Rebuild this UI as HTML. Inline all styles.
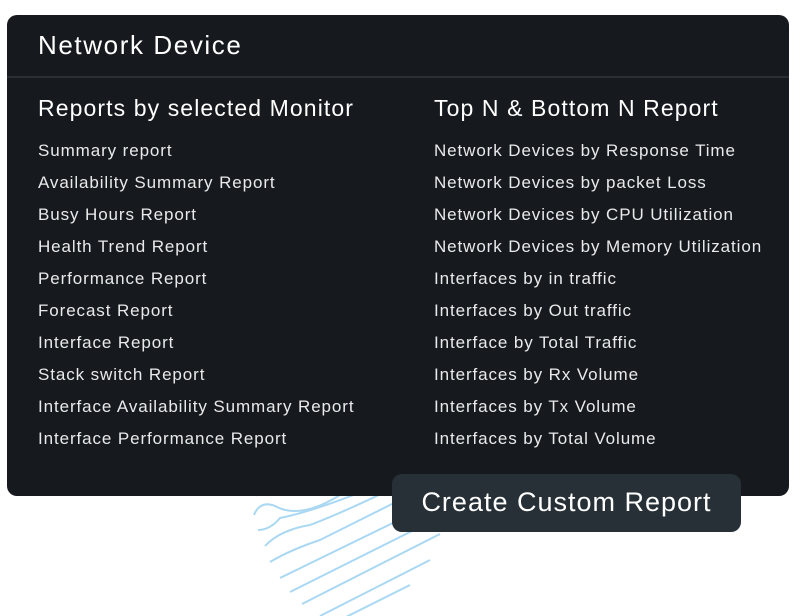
<!DOCTYPE html>
<html><head><style>
body{margin:0;width:794px;height:616px;background:#fff;position:relative;overflow:hidden;font-family:"Liberation Sans",sans-serif;color:#f2f4f5}
.card{position:absolute;left:7px;top:15px;width:782px;height:481px;background:#161a1e;border-radius:10px}
.title{position:absolute;left:31px;top:15px;font-size:26px;color:#fff;letter-spacing:1.6px}
.line{position:absolute;left:0;right:0;top:61px;height:2px;background:#283034}
.col{position:absolute;top:76px}
.col h2{margin:0 0 10px;font-size:23px;font-weight:normal;color:#fff;height:34px;line-height:34px;letter-spacing:1.1px}
.col div{font-size:17px;height:32px;line-height:32px;color:#e8eaeb;letter-spacing:0.9px}
.btn{position:absolute;left:392px;top:474px;width:349px;height:58px;background:#263036;border-radius:10px;font-size:27px;color:#fff;text-align:center;line-height:56px;letter-spacing:1px}
</style></head><body>
<svg style="position:absolute;left:240px;top:470px" width="230" height="146" fill="none" stroke="#aad8f2" stroke-width="2">
<path d="M16 26 Q25 10 40 18 Q60 30 90 15"/>
<path d="M14 45 Q20 30 35 36 Q60 50 100 25 L140 10"/>
<path d="M18 60 Q30 60 40 48 Q80 40 150 10"/>
<path d="M25 76 Q40 60 70 55 Q110 40 190 0"/>
<path d="M30 92 Q50 80 80 70 L200 10"/>
<path d="M40 108 L200 30"/>
<path d="M50 122 L202 46"/>
<path d="M62 134 L200 64"/>
<path d="M80 146 L190 90"/>
<path d="M100 150 L170 115"/>
</svg>
<div class="card">
<div class="title">Network Device</div>
<div class="line"></div>
<div class="col" style="left:31px"><h2>Reports by selected Monitor</h2>
<div>Summary report</div><div>Availability Summary Report</div><div>Busy Hours Report</div><div>Health Trend Report</div><div>Performance Report</div><div>Forecast Report</div><div>Interface Report</div><div>Stack switch Report</div><div>Interface Availability Summary Report</div><div>Interface Performance Report</div></div>
<div class="col" style="left:427px"><h2>Top N &amp; Bottom N Report</h2>
<div>Network Devices by Response Time</div><div>Network Devices by packet Loss</div><div>Network Devices by CPU Utilization</div><div>Network Devices by Memory Utilization</div><div>Interfaces by in traffic</div><div>Interfaces by Out traffic</div><div>Interface by Total Traffic</div><div>Interfaces by Rx Volume</div><div>Interfaces by Tx Volume</div><div>Interfaces by Total Volume</div></div>
</div>
<div class="btn">Create Custom Report</div>
</body></html>
